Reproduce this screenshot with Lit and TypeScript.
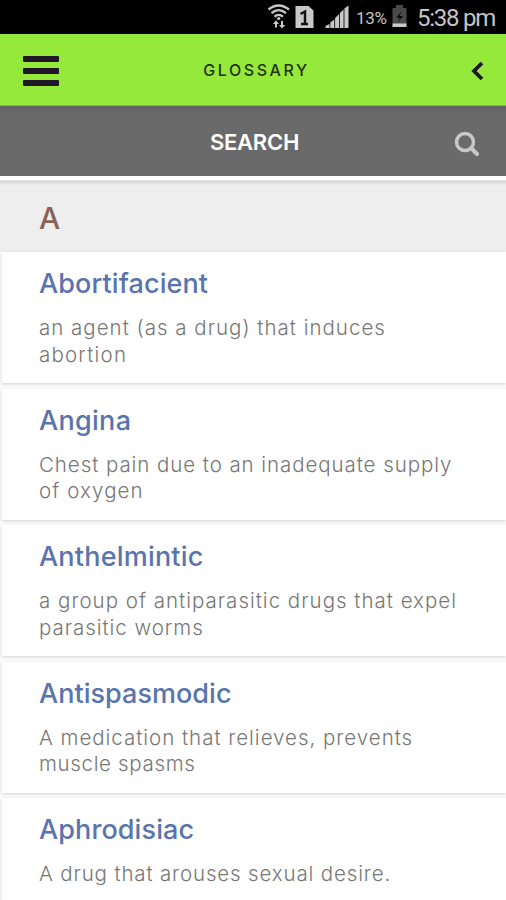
import { LitElement, html, css } from "lit";
import { customElement } from "lit/decorators.js";

interface Line { text: string; spacing: number }
interface Entry { term: Line; lines: Line[] }

const line = (text: string, spacing = 0): Line => ({ text, spacing });

const entries: Entry[] = [
  { term: line("Abortifacient", 0.1), lines: [line("an agent (as a drug) that induces", 1), line("abortion", 1.2)] },
  { term: line("Angina", 0.3), lines: [line("Chest pain due to an inadequate supply", 0.93), line("of oxygen", 1.1)] },
  { term: line("Anthelmintic", 0.2), lines: [line("a group of antiparasitic drugs that expel", 1), line("parasitic worms", 0.95)] },
  { term: line("Antispasmodic", 0.03), lines: [line("A medication that relieves, prevents", 0.98), line("muscle spasms", 0.66)] },
  { term: line("Aphrodisiac", 0.1), lines: [line("A drug that arouses sexual desire.", 0.85)] },
];

@customElement("status-bar")
class StatusBar extends LitElement {
  static styles = css`
    :host { display: block; height: 34px; background: #000; }
    .bar { display: flex; height: 34px; justify-content: flex-end; padding-right: 11px; color: #c4c4c4;
      font-family: Roboto, "Liberation Sans", sans-serif; white-space: nowrap; }
    .icons { width: 90px; height: 34px; flex: none; }
    .pct { font-size: 17px; line-height: 36px; width: 31px; margin-right: 5px; letter-spacing: -0.35px; }
    .battery { width: 15px; height: 34px; flex: none; margin-right: 10px; }
    .time { font-size: 24px; line-height: 37px; width: 78px; letter-spacing: -1.250px; }
  `;
  render() {
    return html`<div class="bar">
      <svg class="icons" viewBox="266 0 90 34" fill="none" stroke="#c8c8c8">
        <path d="M268.500 9.500Q278.500 1.500 289 9.500M271.500 13.200Q278.500 7 286 13.200M274.500 16.700Q278.500 13 283 16.700" stroke-width="2.300"/>
        <circle cx="278.700" cy="18.500" r="1.600" fill="#c8c8c8" stroke="none"/>
        <path d="M276 27.500V22M282 21V26.500" stroke-width="2"/>
        <path d="M272.800 24L276 20.300L279 24ZM279 25L282 28.500L285.200 25Z" fill="#c8c8c8" stroke="none"/>
        <path d="M295.500 6H308.500L313.500 10.500V28H295.500Z" fill="#c8c8c8" stroke="none"/>
        <path d="M300.500 14L305 11.500V24M301 24H308" stroke="#111" stroke-width="2.500"/>
        <path d="M325.500 28V26L329.500 24V28ZM330.300 28V22.500L334.300 19.500V28ZM335.100 28V18L339.100 14V28ZM339.900 28V13L343.600 9.500V28ZM344.400 28V8.500L348.500 5.500V28Z" fill="#c8c8c8" stroke="none"/>
      </svg>
      <span class="pct">13%</span>
      <svg class="battery" viewBox="392 0 15 34">
        <path d="M396 5H403V8H406.500V27H392.500V8H396Z" fill="#4a4a4a"/>
        <path d="M401.500 11L396.500 18H400L397.500 23L403 16H399.500Z" fill="#090909"/>
        <path d="M392.500 23.500H406.500V27H392.500Z" fill="#c8c8c8"/>
      </svg>
      <span class="time">5:38 pm</span>
    </div>`;
  }
}

@customElement("glossary-entry")
class GlossaryEntry extends LitElement {
  static properties = { entry: { attribute: false } };
  declare entry: Entry;
  static styles = css`
    :host { display: block; height: 131px; margin: 0 0 5.500px 2px; background: #fff;
      box-shadow: 0 1px 3px rgba(0,0,0,.17); font-family: Inter, "Open Sans", sans-serif; }
    .body { padding: 15px 0 0 37px; white-space: nowrap; }
    .term { margin: 0; font-size: 27px; line-height: 34px; font-weight: 500; color: #5a74ad; }
    .text { margin: 14px 0 0; font-size: 20.500px; line-height: 26.500px; font-weight: 300; color: #777; }
    .row { display: block; }
  `;
  render() {
    const { term, lines } = this.entry;
    return html`<div class="body">
      <h2 class="term"><span style="letter-spacing:${term.spacing}px">${term.text}</span></h2>
      <p class="text">${lines.map((l) => html`<span class="row" style="letter-spacing:${l.spacing}px">${l.text}</span>`)}</p>
    </div>`;
  }
}

@customElement("app-root")
class AppRoot extends LitElement {
  static styles = css`
    :host { display: block; height: 900px; overflow: hidden; background: #fbfbfb; font-family: Inter, "Open Sans", sans-serif; }
    .header { display: grid; grid-template-columns: 60px 1fr 60px; align-items: center; height: 71px; background: #94e93a; }
    .menu { display: flex; flex-direction: column; gap: 6px; margin: 3px 0 0 23px; width: 36px; }
    .stripe { height: 6px; border-radius: 1px; background: #21152a; }
    .title { margin: 1px 0 0 7px; text-align: center; font-size: 16px; line-height: 24px; font-weight: 500; letter-spacing: 2.550px; color: #243010; }
    .back { width: 14px; height: 20px; justify-self: end; margin: 3px 22px 0 0; }
    .search { display: grid; grid-template-columns: 60px 1fr 60px; align-items: center; height: 70px; border-top: 1px solid #999;
      background: linear-gradient(#606060, #6a6a6a 8px); }
    .label { grid-column: 2; text-align: center; margin: 1px 0 0 3px; font-size: 22px; line-height: 28px; font-weight: 600; letter-spacing: -0.250px; color: #fff; }
    .glass { width: 26px; height: 26px; justify-self: end; margin: 5px 26px 0 0; }
    .gap { height: 4px; background: #fff; }
    .letter { height: 72px; box-sizing: border-box; padding: 20px 0 0 39px; background: linear-gradient(#e4e4e4, #dadada 2px, #eee 5px);
      font-size: 30px; line-height: 36px; font-weight: 500; color: #896259; }
  `;
  render() {
    return html`
      <status-bar></status-bar>
      <div class="header">
        <div class="menu"><div class="stripe"></div><div class="stripe"></div><div class="stripe"></div></div>
        <h1 class="title">GLOSSARY</h1>
        <svg class="back" viewBox="0 0 14 20"><path d="M12 2L4 10L12 18" fill="none" stroke="#21152a" stroke-width="3.800"/></svg>
      </div>
      <div class="search">
        <span class="label">SEARCH</span>
        <svg class="glass" viewBox="0 0 26 26" fill="none" stroke="#c8c8c8"><circle cx="11" cy="11" r="8.500" stroke-width="3.500"/><path d="M17 17L23 23" stroke-width="4" stroke-linecap="round"/></svg>
      </div>
      <div class="gap"></div>
      <div class="letter">A</div>
      ${entries.map((e) => html`<glossary-entry .entry=${e}></glossary-entry>`)}
    `;
  }
}
